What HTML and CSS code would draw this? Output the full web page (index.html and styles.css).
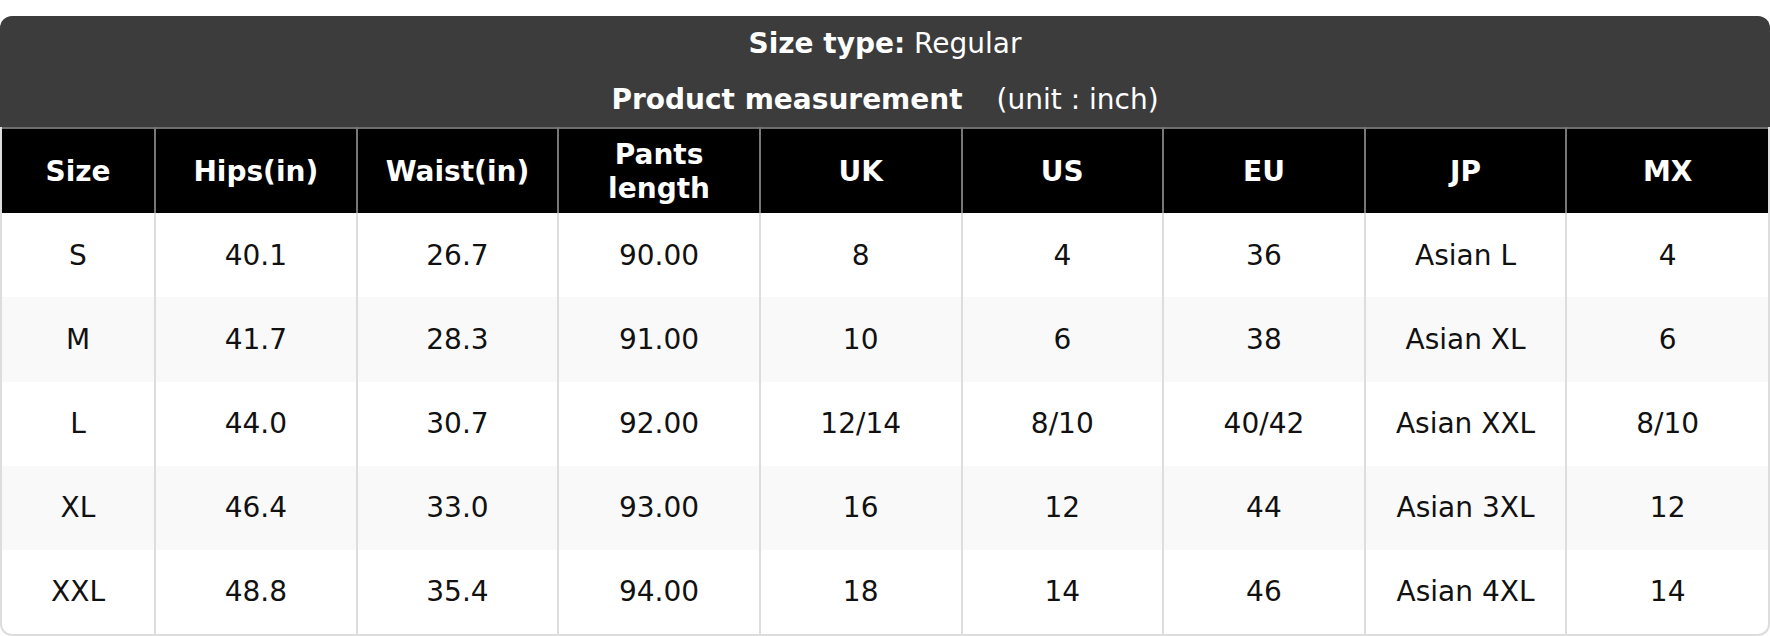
FILE: index.html
```html
<!DOCTYPE html>
<html lang="en">
<head>
<meta charset="utf-8">
<title>Size chart</title>
<link rel="stylesheet" href="styles.css">
</head>
<body>
<div class="page">
  <div class="card">
    <div class="title">
      <div class="title-line first"><b>Size type:</b> Regular</div>
      <div class="title-line"><b>Product measurement</b><span class="unit">(unit : inch)</span></div>
    </div>
    <div class="table-wrap">
      <table class="chart">
        <colgroup>
          <col class="col-first">
          <col><col><col><col><col><col><col><col>
        </colgroup>
        <thead>
          <tr>
            <th>Size</th>
            <th>Hips(in)</th>
            <th>Waist(in)</th>
            <th>Pants<br>length</th>
            <th>UK</th>
            <th>US</th>
            <th>EU</th>
            <th>JP</th>
            <th>MX</th>
          </tr>
        </thead>
        <tbody>
          <tr><td>S</td><td>40.1</td><td>26.7</td><td>90.00</td><td>8</td><td>4</td><td>36</td><td>Asian L</td><td>4</td></tr>
          <tr><td>M</td><td>41.7</td><td>28.3</td><td>91.00</td><td>10</td><td>6</td><td>38</td><td>Asian XL</td><td>6</td></tr>
          <tr><td>L</td><td>44.0</td><td>30.7</td><td>92.00</td><td>12/14</td><td>8/10</td><td>40/42</td><td>Asian XXL</td><td>8/10</td></tr>
          <tr><td>XL</td><td>46.4</td><td>33.0</td><td>93.00</td><td>16</td><td>12</td><td>44</td><td>Asian 3XL</td><td>12</td></tr>
          <tr><td>XXL</td><td>48.8</td><td>35.4</td><td>94.00</td><td>18</td><td>14</td><td>46</td><td>Asian 4XL</td><td>14</td></tr>
        </tbody>
      </table>
    </div>
  </div>
</div>
</body>
</html>
```
FILE: styles.css
```css
html, body {
  margin: 0;
  padding: 0;
  background: #ffffff;
}

body {
  font-family: "DejaVu Sans", Verdana, sans-serif;
  font-size: 28px;
  line-height: 1.2;
  color: #111111;
}

.page {
  padding-top: 16px;
}

.card {
  width: 1770px;
}

.title {
  background: #3c3c3c;
  color: #ffffff;
  text-align: center;
  border-radius: 12px 12px 0 0;
  padding: 11px 0 11px;
}

.title-line.first {
  margin-bottom: 22px;
}

.unit {
  margin-left: 34px;
}

.table-wrap {
  border: 2px solid #dddddd;
  border-top: 0;
  border-radius: 0 0 12px 12px;
  overflow: hidden;
}

.chart {
  width: 100%;
  border-collapse: collapse;
  table-layout: fixed;
}

.col-first {
  width: 153px;
}

.chart thead tr {
  border-top: 2px solid #6e6e6e;
}

.chart th {
  background: #000000;
  color: #ffffff;
  font-weight: bold;
  padding: 9px 6px 8px;
  text-align: center;
  vertical-align: middle;
  border-left: 2px solid #777777;
}

.chart td {
  padding: 25.25px 6px;
  text-align: center;
  vertical-align: middle;
  border-left: 2px solid #dddddd;
}

.chart th:first-child,
.chart td:first-child {
  border-left: 0;
}

.chart tbody tr:nth-child(even) td {
  background: #f9f9f9;
}
```
